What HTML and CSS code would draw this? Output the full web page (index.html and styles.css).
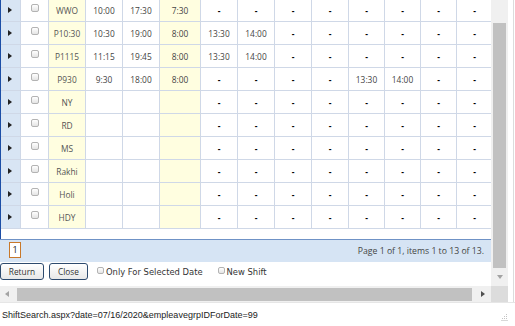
FILE: index.html
```html
<!DOCTYPE html>
<html lang="en">
<head>
    <meta charset="UTF-8">
    <title>Shift Search</title>
    <link rel="stylesheet" href="styles.css">
</head>
<body>
    <div class="window">
        <div class="frame">
            <div class="viewport">
                <div class="scroller">
                    <div class="grid">
                        <table class="shifts">
                            <colgroup>
                                <col class="w20"><col class="w28"><col class="w37"><col class="w37"><col class="w37"><col class="w41">
                                <col class="w37"><col class="w37"><col class="w37"><col class="w37"><col class="w36"><col class="w36"><col class="w36"><col class="w36">
                            </colgroup>
                            <tr>
                                <td class="exp"><span class="tri"></span></td><td class="chk"><input type="checkbox"></td>
                                <td class="code">WWO</td><td>10:00</td><td>17:30</td><td class="hrs">7:30</td>
                                <td class="dash">-</td><td class="dash">-</td><td class="dash">-</td><td class="dash">-</td><td class="dash">-</td><td class="dash">-</td><td class="dash">-</td><td class="dash">-</td>
                            </tr>
                            <tr>
                                <td class="exp"><span class="tri"></span></td><td class="chk"><input type="checkbox"></td>
                                <td class="code">P10:30</td><td>10:30</td><td>19:00</td><td class="hrs">8:00</td>
                                <td>13:30</td><td>14:00</td><td class="dash">-</td><td class="dash">-</td><td class="dash">-</td><td class="dash">-</td><td class="dash">-</td><td class="dash">-</td>
                            </tr>
                            <tr>
                                <td class="exp"><span class="tri"></span></td><td class="chk"><input type="checkbox"></td>
                                <td class="code">P1115</td><td>11:15</td><td>19:45</td><td class="hrs">8:00</td>
                                <td>13:30</td><td>14:00</td><td class="dash">-</td><td class="dash">-</td><td class="dash">-</td><td class="dash">-</td><td class="dash">-</td><td class="dash">-</td>
                            </tr>
                            <tr>
                                <td class="exp"><span class="tri"></span></td><td class="chk"><input type="checkbox"></td>
                                <td class="code">P930</td><td>9:30</td><td>18:00</td><td class="hrs">8:00</td>
                                <td class="dash">-</td><td class="dash">-</td><td class="dash">-</td><td class="dash">-</td><td>13:30</td><td>14:00</td><td class="dash">-</td><td class="dash">-</td>
                            </tr>
                            <tr>
                                <td class="exp"><span class="tri"></span></td><td class="chk"><input type="checkbox"></td>
                                <td class="code">NY</td><td></td><td></td><td class="hrs"></td>
                                <td class="dash">-</td><td class="dash">-</td><td class="dash">-</td><td class="dash">-</td><td class="dash">-</td><td class="dash">-</td><td class="dash">-</td><td class="dash">-</td>
                            </tr>
                            <tr>
                                <td class="exp"><span class="tri"></span></td><td class="chk"><input type="checkbox"></td>
                                <td class="code">RD</td><td></td><td></td><td class="hrs"></td>
                                <td class="dash">-</td><td class="dash">-</td><td class="dash">-</td><td class="dash">-</td><td class="dash">-</td><td class="dash">-</td><td class="dash">-</td><td class="dash">-</td>
                            </tr>
                            <tr>
                                <td class="exp"><span class="tri"></span></td><td class="chk"><input type="checkbox"></td>
                                <td class="code">MS</td><td></td><td></td><td class="hrs"></td>
                                <td class="dash">-</td><td class="dash">-</td><td class="dash">-</td><td class="dash">-</td><td class="dash">-</td><td class="dash">-</td><td class="dash">-</td><td class="dash">-</td>
                            </tr>
                            <tr>
                                <td class="exp"><span class="tri"></span></td><td class="chk"><input type="checkbox"></td>
                                <td class="code">Rakhi</td><td></td><td></td><td class="hrs"></td>
                                <td class="dash">-</td><td class="dash">-</td><td class="dash">-</td><td class="dash">-</td><td class="dash">-</td><td class="dash">-</td><td class="dash">-</td><td class="dash">-</td>
                            </tr>
                            <tr>
                                <td class="exp"><span class="tri"></span></td><td class="chk"><input type="checkbox"></td>
                                <td class="code">Holi</td><td></td><td></td><td class="hrs"></td>
                                <td class="dash">-</td><td class="dash">-</td><td class="dash">-</td><td class="dash">-</td><td class="dash">-</td><td class="dash">-</td><td class="dash">-</td><td class="dash">-</td>
                            </tr>
                            <tr>
                                <td class="exp"><span class="tri"></span></td><td class="chk"><input type="checkbox"></td>
                                <td class="code">HDY</td><td></td><td></td><td class="hrs"></td>
                                <td class="dash">-</td><td class="dash">-</td><td class="dash">-</td><td class="dash">-</td><td class="dash">-</td><td class="dash">-</td><td class="dash">-</td><td class="dash">-</td>
                            </tr>
                        </table>
                    </div>
                    <div class="pager">
                        <span class="page-num">1</span>
                        <span class="page-info">Page 1 of 1, items 1 to 13 of 13.</span>
                    </div>
                    <div class="actions">
                        <button class="btn btn-return">Return</button>
                        <button class="btn btn-close">Close</button>
                        <label class="opt"><input type="checkbox">Only For Selected Date</label>
                        <label class="opt opt-new"><input type="checkbox">New Shift</label>
                    </div>
                </div>
                <div class="vscroll">
                    <div class="vthumb"></div>
                    <span class="arrow-down"></span>
                </div>
            </div>
            <div class="hscroll">
                <div class="htrack">
                    <span class="arrow-left"></span>
                    <div class="hthumb"></div>
                    <span class="arrow-right"></span>
                </div>
                <div class="corner"></div>
            </div>
        </div>
        <div class="status">
            <span class="url">ShiftSearch.aspx?date=07/16/2020&amp;empleavegrpIDForDate=99</span>
            <svg class="grip" width="7" height="7" viewBox="0 0 7 7">
                <rect x="5" y="0" width="1" height="1" fill="#c4c4c4"/>
                <rect x="3" y="2" width="1" height="1" fill="#c4c4c4"/>
                <rect x="5" y="2" width="1" height="1" fill="#c4c4c4"/>
                <rect x="1" y="4" width="1" height="1" fill="#c4c4c4"/>
                <rect x="3" y="4" width="1" height="1" fill="#c4c4c4"/>
                <rect x="5" y="4" width="1" height="1" fill="#c4c4c4"/>
                <rect x="0" y="6" width="7" height="1" fill="#d8d8d8"/>
            </svg>
        </div>
    </div>
</body>
</html>
```

FILE: styles.css
```css
body {
    margin: 0;
    font-family: "Open Sans", sans-serif;
    background-color: #fff;
    overflow: hidden;
}
.window {
    width: 515px;
    height: 326px;
    display: flex;
    flex-direction: column;
}
.frame {
    width: 508px;
    height: 302px;
    padding-right: 5px;
    border-right: 1px solid #dcdcdc;
    display: flex;
    flex-direction: column;
}
.viewport {
    display: flex;
    height: 286px;
}
.scroller {
    width: 491px;
    overflow: hidden;
}
.grid {
    margin-top: -1px;
    border-left: 1px solid #1c4ea6;
    padding-bottom: 10px;
}
.shifts {
    border-collapse: separate;
    border-spacing: 0;
    table-layout: fixed;
    width: 492px;
}
.w20 { width: 20px; }
.w28 { width: 28px; }
.w36 { width: 36px; }
.w37 { width: 37px; }
.w41 { width: 41px; }
.shifts td {
    height: 22px;
    padding: 0;
    border-right: 1px solid #cfd8e7;
    border-bottom: 1px solid #cfd8e7;
    text-align: center;
    vertical-align: middle;
    font-size: 8.4px;
    color: #444;
    white-space: nowrap;
}
.shifts td.exp {
    background-color: #d8e5f4;
    text-align: left;
}
.shifts td.code, .shifts td.hrs {
    background-color: #fffee0;
}
.shifts td.code {
    color: #555;
}
.shifts td.dash {
    color: #000;
    font-weight: bold;
}
.shifts td.chk {
    vertical-align: top;
}
.tri {
    display: block;
    width: 0;
    height: 0;
    margin-left: 7px;
    border-left: 4px solid #222;
    border-top: 3px solid transparent;
    border-bottom: 3px solid transparent;
}
input[type="checkbox"] {
    appearance: none;
    -webkit-appearance: none;
    width: 8px;
    height: 8px;
    margin: 0;
    border: 1px solid #b3b3b3;
    border-radius: 2px;
    background: linear-gradient(#fff, #e4e4e4);
    box-sizing: border-box;
}
.chk input {
    display: block;
    margin: 5px auto 0;
}
.pager {
    height: 20px;
    padding: 2px 7px 0 9px;
    border-top: 1px solid #6f92c6;
    background-color: #d6e4f4;
    display: flex;
    justify-content: space-between;
    align-items: flex-start;
}
.page-num {
    width: 10px;
    height: 14px;
    border: 1px solid #c8782a;
    background-color: #fff;
    font-size: 9px;
    line-height: 14px;
    text-align: center;
    color: #222;
}
.page-info {
    align-self: center;
    margin-top: -2px;
    font-size: 8.7px;
    color: #444;
}
.actions {
    display: flex;
    align-items: center;
    padding-top: 1px;
}
.btn {
    height: 17px;
    padding: 0;
    border: 1px solid #2d4a6e;
    border-radius: 3px;
    background: linear-gradient(#fff, #e8e8e8);
    font-family: "Open Sans", sans-serif;
    font-size: 8.3px;
    color: #333;
    box-sizing: border-box;
}
.btn-return { width: 44px; }
.btn-close { width: 39px; margin-left: 5px; }
.opt {
    display: flex;
    align-items: center;
    gap: 2px;
    margin-left: 9px;
    font-family: "DejaVu Sans", sans-serif;
    font-size: 8.4px;
    color: #333;
}
.opt input {
    width: 7px;
    height: 7px;
    margin-top: -3px;
}
.opt-new {
    margin-left: 15px;
}
.vscroll {
    width: 17px;
    padding-top: 23px;
    box-sizing: border-box;
    background-color: #f0f0f0;
    display: flex;
    flex-direction: column;
    align-items: center;
}
.vthumb {
    width: 13px;
    height: 245px;
    background-color: #c1c1c1;
}
.arrow-down {
    margin-top: 7px;
    border-top: 4px solid #a3a3a3;
    border-left: 3.5px solid transparent;
    border-right: 3.5px solid transparent;
}
.hscroll {
    display: flex;
    height: 16px;
}
.htrack {
    width: 491px;
    background-color: #f0f0f0;
    display: flex;
    align-items: center;
}
.arrow-left {
    margin-left: 5px;
    border-right: 4px solid #a3a3a3;
    border-top: 3.5px solid transparent;
    border-bottom: 3.5px solid transparent;
}
.hthumb {
    align-self: flex-start;
    margin-top: 2px;
    margin-left: 8px;
    width: 455px;
    height: 13px;
    background-color: #c1c1c1;
}
.arrow-right {
    margin-left: 9px;
    border-left: 4px solid #505050;
    border-top: 3.5px solid transparent;
    border-bottom: 3.5px solid transparent;
}
.corner {
    width: 17px;
    background-color: #dcdcdc;
}
.status {
    flex: 1;
    border-top: 1px solid #e6e6e6;
    padding: 0 7px 0 2px;
    display: flex;
    justify-content: space-between;
    align-items: center;
    font-family: "Liberation Sans", sans-serif;
    font-size: 9px;
    color: #222;
}
.grip {
    align-self: flex-end;
    margin-bottom: 5px;
}
```
